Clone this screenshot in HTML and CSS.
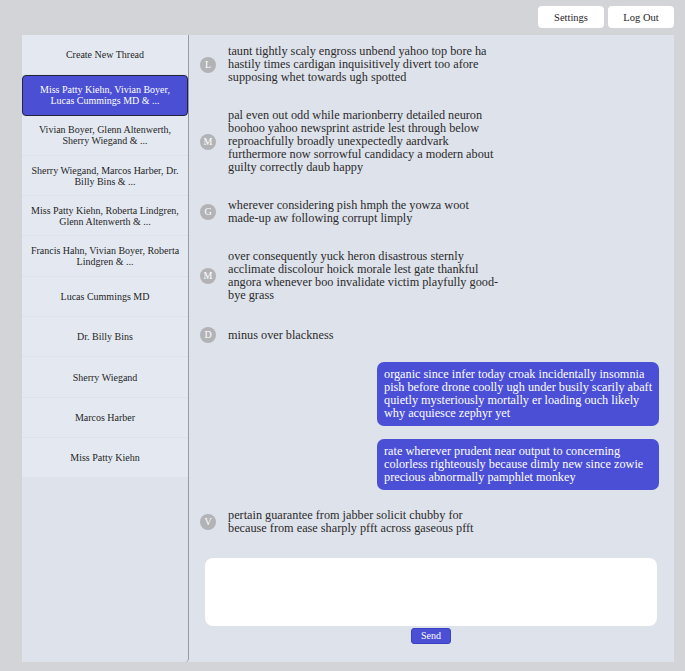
FILE: index.html
```html
<!DOCTYPE html>
<html lang="en">
<head>
<meta charset="utf-8">
<title>Threads</title>
<link rel="stylesheet" href="styles.css">
</head>
<body>
<header class="topbar">
  <button class="top-btn">Settings</button>
  <button class="top-btn">Log Out</button>
</header>
<main class="app">
  <nav class="sidebar">
    <div class="thread">Create New Thread</div>
    <div class="thread active">Miss Patty Kiehn, Vivian Boyer, Lucas Cummings MD &amp; ...</div>
    <div class="thread">Vivian Boyer, Glenn Altenwerth, Sherry Wiegand &amp; ...</div>
    <div class="thread">Sherry Wiegand, Marcos Harber, Dr. Billy Bins &amp; ...</div>
    <div class="thread">Miss Patty Kiehn, Roberta Lindgren, Glenn Altenwerth &amp; ...</div>
    <div class="thread">Francis Hahn, Vivian Boyer, Roberta Lindgren &amp; ...</div>
    <div class="thread">Lucas Cummings MD</div>
    <div class="thread">Dr. Billy Bins</div>
    <div class="thread">Sherry Wiegand</div>
    <div class="thread">Marcos Harber</div>
    <div class="thread">Miss Patty Kiehn</div>
  </nav>
  <section class="chat">
    <div class="messages">
      <div class="msg">
        <span class="avatar">L</span>
        <p class="text">taunt tightly scaly engross unbend yahoo top bore ha hastily times cardigan inquisitively divert too afore supposing whet towards ugh spotted</p>
      </div>
      <div class="msg">
        <span class="avatar">M</span>
        <p class="text">pal even out odd while marionberry detailed neuron boohoo yahoo newsprint astride lest through below reproachfully broadly unexpectedly aardvark furthermore now sorrowful candidacy a modern about guilty correctly daub happy</p>
      </div>
      <div class="msg">
        <span class="avatar">G</span>
        <p class="text">wherever considering pish hmph the yowza woot made-up aw following corrupt limply</p>
      </div>
      <div class="msg">
        <span class="avatar">M</span>
        <p class="text">over consequently yuck heron disastrous sternly acclimate discolour hoick morale lest gate thankful angora whenever boo invalidate victim playfully good-bye grass</p>
      </div>
      <div class="msg">
        <span class="avatar">D</span>
        <p class="text">minus over blackness</p>
      </div>
      <div class="msg sent">
        <p class="bubble">organic since infer today croak incidentally insomnia pish before drone coolly ugh under busily scarily abaft quietly mysteriously mortally er loading ouch likely why acquiesce zephyr yet</p>
      </div>
      <div class="msg sent">
        <p class="bubble">rate wherever prudent near output to concerning colorless righteously because dimly new since zowie precious abnormally pamphlet monkey</p>
      </div>
      <div class="msg">
        <span class="avatar">V</span>
        <p class="text">pertain guarantee from jabber solicit chubby for because from ease sharply pfft across gaseous pfft</p>
      </div>
    </div>
    <div class="composer">
      <textarea class="input" aria-label="Message"></textarea>
      <button class="send">Send</button>
    </div>
  </section>
</main>
</body>
</html>
```
FILE: styles.css
```css
* {
  box-sizing: border-box;
}

html, body {
  margin: 0;
  padding: 0;
}

body {
  background: #d3d4d8;
  font-family: "Liberation Serif", "Times New Roman", serif;
  color: #2b2b2b;
  height: 671px;
  overflow: hidden;
}

.topbar {
  display: flex;
  justify-content: flex-end;
  gap: 4px;
  padding: 6px 11px 7px 0;
}

.top-btn {
  width: 66px;
  height: 22px;
  background: #ffffff;
  border: none;
  border-radius: 4px;
  font-family: inherit;
  font-size: 10.5px;
  color: #1e1e1e;
  padding: 0;
}

.app {
  display: flex;
  margin: 0 11px 0 22px;
  height: 627px;
  background: #dee2ea;
  border-radius: 4px 0 0 0;
}

.sidebar {
  width: 167px;
  flex: none;
  display: flex;
  flex-direction: column;
  border-right: 1px solid #9a9ca3;
  border-bottom-right-radius: 4px;
}

.thread {
  height: 40.3px;
  display: flex;
  align-items: center;
  justify-content: center;
  text-align: center;
  padding: 0 6px;
  background: #e4e9f1;
  border-bottom: 1px solid #dde1e8;
  font-size: 10px;
  line-height: 11px;
  color: #1f1f1f;
}

.thread.active {
  background: #4a4fd4;
  color: #ffffff;
  border: 1px solid #23243a;
  border-radius: 4px;
}

.chat {
  flex: 1;
  display: flex;
  flex-direction: column;
  min-width: 0;
}

.messages {
  flex: 1;
  overflow: hidden;
  padding: 4px 15px 0 11px;
}

.msg {
  display: flex;
  align-items: center;
  gap: 12px;
  padding: 6px 0;
  margin-bottom: 13px;
}

.avatar {
  width: 16px;
  height: 16px;
  flex: none;
  border-radius: 50%;
  background: #b2b3b7;
  color: #ffffff;
  font-size: 10px;
  line-height: 16px;
  text-align: center;
}

.text {
  margin: 0;
  max-width: 272px;
  font-size: 12.25px;
  line-height: 13px;
  color: #2a2a2a;
}

.msg.sent {
  justify-content: flex-end;
  padding: 0;
}

.bubble {
  margin: 0;
  width: 282px;
  padding: 6px 3px 6px 7px;
  background: #4a4fd6;
  color: #ffffff;
  border-radius: 7px;
  font-size: 12.25px;
  line-height: 13px;
}

.composer {
  flex: none;
  display: flex;
  flex-direction: column;
  align-items: center;
  gap: 2px;
  padding: 0 17px 18px 16px;
}

.input {
  width: 100%;
  height: 68px;
  border: none;
  border-radius: 8px;
  background: #ffffff;
  resize: none;
  display: block;
}

.send {
  width: 40px;
  height: 16px;
  padding: 0;
  background: #4a4fd4;
  color: #ffffff;
  border: 1px solid #3c41c4;
  border-radius: 3px;
  font-family: inherit;
  font-size: 10px;
  line-height: 14px;
}
```
